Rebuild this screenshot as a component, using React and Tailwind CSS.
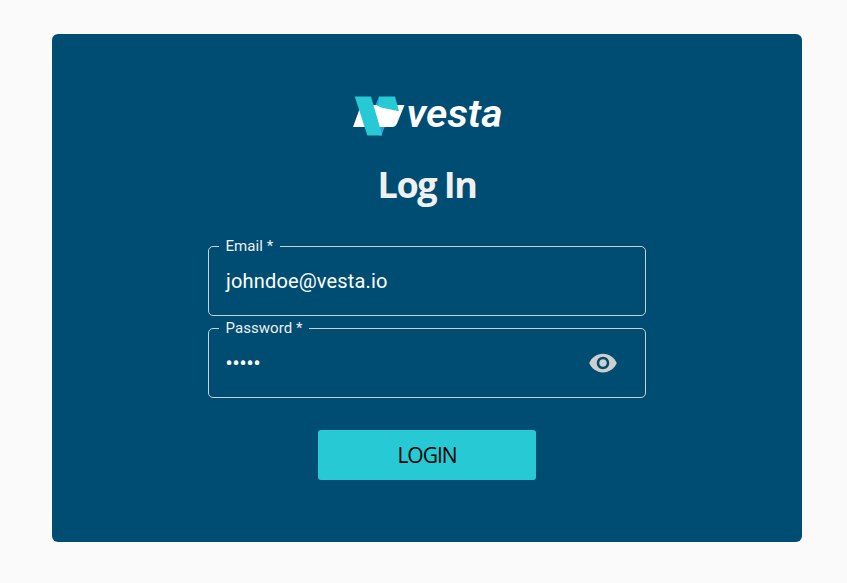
function VestaMark() {
  return (
    <svg width="52" height="40" viewBox="0 0 52 40" className="shrink-0" aria-hidden="true">
      <path d="M8 9H51.5L44 27.5Q42.5 31 39 31H0Z" fill="#fff" />
      <path d="M31.7 31L28.5 39.5H26L23 31Z" fill="#2f9be0" />
      <path d="M26 0.5H42L46 15.3L28 11.5L24 9.5Z" fill="#27cad4" />
      <path d="M26 0.5L22.5 9H25Z" fill="#2f9be0" />
      <path d="M1.8 0.5H18L29.3 39.5H14.3Z" fill="#27cad4" />
    </svg>
  );
}

function EyeIcon() {
  return (
    <svg width="30" height="30" viewBox="0 0 24 24" fill="#cfcfcf" aria-hidden="true">
      <path d="M12 4.5C7 4.5 2.73 7.61 1 12c1.73 4.39 6 7.5 11 7.5s9.27-3.11 11-7.5c-1.73-4.39-6-7.5-11-7.5M12 17c-2.76 0-5-2.24-5-5s2.24-5 5-5 5 2.24 5 5-2.24 5-5 5m0-8c-1.66 0-3 1.34-3 3s1.34 3 3 3 3-1.34 3-3-1.34-3-3-3" />
    </svg>
  );
}

function Field({ label, children }) {
  return (
    <fieldset className="h-[76px] w-[438px] min-w-0 rounded-[5px] border border-[#cfcfcf] pr-[27px] pl-[10px]">
      <legend className="h-[13px] pr-[6.5px] pl-[6.5px] text-[15px] leading-[13px] tracking-[0.05px] whitespace-nowrap text-[#efefef]">{label}</legend>
      <div className="flex h-[56px] items-center justify-between pl-[7px]">{children}</div>
    </fieldset>
  );
}

export default function App() {
  return (
    <main className="h-[583px] w-[847px] overflow-hidden bg-[#fafafa] pt-[34px] pl-[52px] font-['Roboto',sans-serif]">
      <section className="flex h-[508px] w-[750px] flex-col items-center rounded-[6px] bg-[#004d73] pt-[54px]">
        <div className="flex h-14 w-[152px] items-center pl-[2px]">
          <VestaMark />
          <svg width="98" height="56" viewBox="0 0 98 56" className="shrink-0">
            <text x="1.5" y="39" textLength="96" lengthAdjust="spacingAndGlyphs" fill="#fff" className="font-['Roboto',sans-serif] text-[39px] font-semibold italic">vesta</text>
          </svg>
        </div>
        <h1 className="mt-[18px] h-[50px] text-center font-['Open_Sans',sans-serif] text-[36px] leading-[46px] font-bold tracking-[-1.5px] text-[#f0f0f0]">Log In</h1>
        <form className="mt-[28px] flex flex-col items-center">
          <Field label="Email *">
            <span className="text-[20px] leading-6 tracking-[0.17px] text-white">johndoe@vesta.io</span>
          </Field>
          <div className="mt-[6px]">
            <Field label="Password *">
              <span className="-ml-[0.5px] text-[20px] leading-6 font-medium text-white">•••••</span>
              <EyeIcon />
            </Field>
          </div>
          <button type="button" className="mt-8 h-[50px] w-[218px] rounded-[3px] bg-[#27cad4] pt-[2px] font-['Open_Sans',sans-serif] text-[21px] tracking-[-1px] text-black">LOGIN</button>
        </form>
      </section>
    </main>
  );
}
